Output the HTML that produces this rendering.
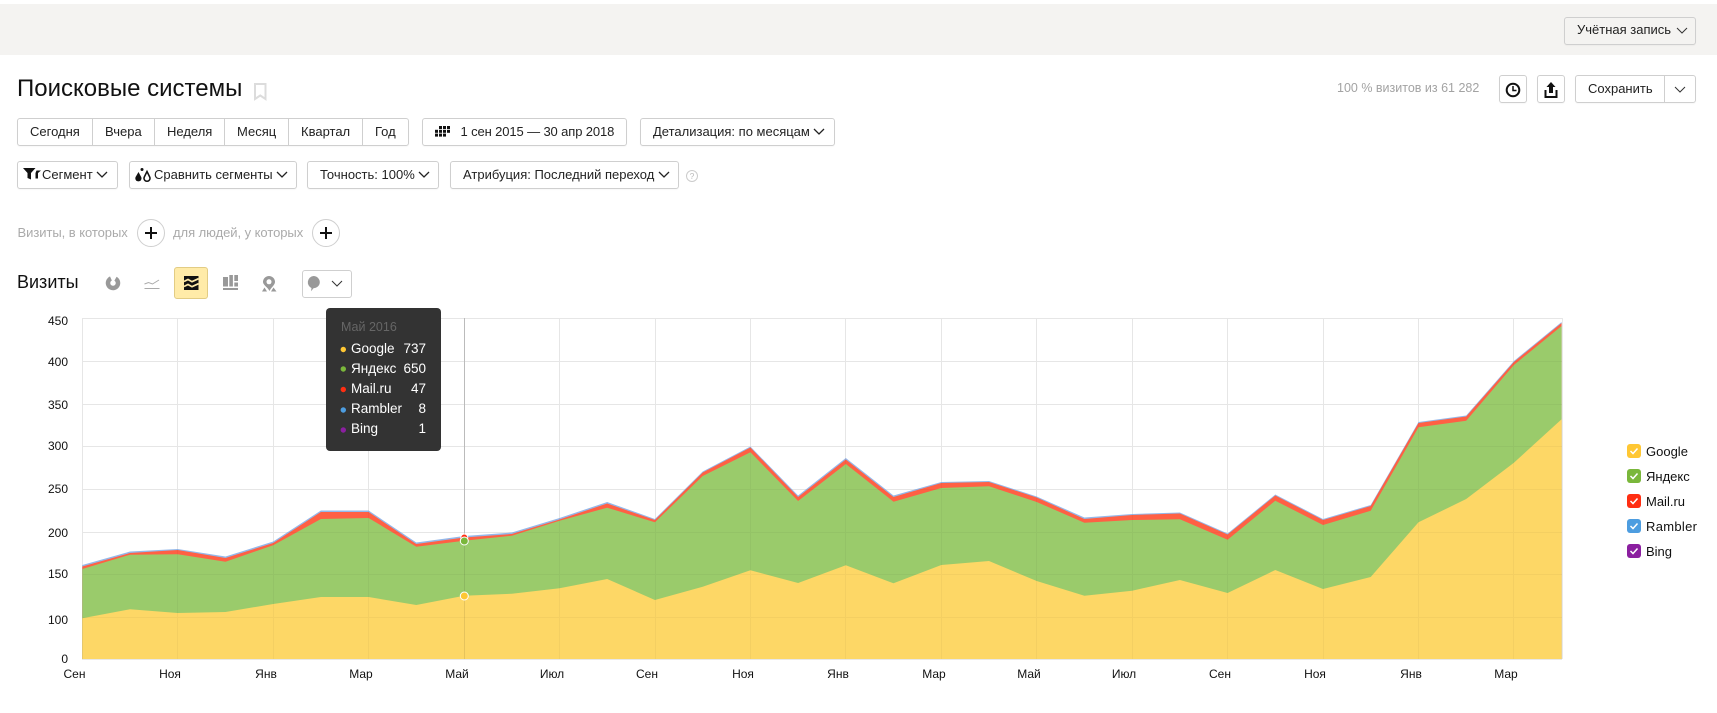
<!DOCTYPE html>
<html lang="ru"><head><meta charset="utf-8"><title>Поисковые системы</title>
<style>
html,body{margin:0;padding:0;background:#fff}
#p{position:relative;width:1717px;height:713px;overflow:hidden;background:#fff;font-family:"Liberation Sans","DejaVu Sans",sans-serif;font-size:13px;color:#222}
.t{position:absolute;white-space:nowrap;line-height:16px;height:16px}
.b{position:absolute;box-sizing:border-box;border:1px solid #cfcfcf;border-radius:3px;background:#fff;box-shadow:0 1px 1px rgba(0,0,0,.03)}
.d{position:absolute;top:118px;height:28px;width:1px;background:#cfcfcf}
.g{color:#a3a3a3}
svg{position:absolute;overflow:visible}
.c{fill:none;stroke:#222;stroke-width:1.3}
.e{fill:none;stroke:#333;stroke-width:1}
.w{color:#fff}
</style></head><body><div id="p">
<div style="position:absolute;left:0;top:4px;width:1717px;height:51px;background:#f4f3f1"></div>
<div class="b" style="left:1564px;top:17px;width:132px;height:28px;background:#f4f3f1"></div>
<span class="t" style="left:1577px;top:22px">Учётная запись</span>
<svg style="left:0;top:0" width="1" height="1"><path class="e" d="M1677 28l5 5 5-5"/></svg>

<span class="t" style="left:17px;top:75px;font-size:24px;line-height:28px;height:28px;color:#111">Поисковые системы</span>
<svg style="left:254px;top:83px" width="13" height="18"><path d="M1 1h10.500v15l-5.250-3.500L1 16z" fill="none" stroke="#dcdcdc" stroke-width="2"/></svg>

<span class="t g" style="left:1337px;top:80px;font-size:12.500px">100 % визитов из 61 282</span>
<div class="b" style="left:1499px;top:75px;width:28px;height:28px"></div>
<svg style="left:1499px;top:75px" width="28" height="28"><circle cx="14" cy="15" r="6.300" fill="none" stroke="#111" stroke-width="2"/><path d="M14 11v4.500h3.500" fill="none" stroke="#111" stroke-width="1.500"/></svg>
<div class="b" style="left:1537px;top:75px;width:28px;height:28px"></div>
<svg style="left:1537px;top:75px" width="28" height="28"><path d="M14 7l4.500 5H16v6h-4v-6H9.500z" fill="#111"/><path d="M8.500 15v7h11v-7" fill="none" stroke="#111" stroke-width="2"/></svg>
<div class="b" style="left:1575px;top:75px;width:121px;height:28px"></div>
<div style="position:absolute;left:1664px;top:75px;width:1px;height:28px;background:#cfcfcf"></div>
<span class="t" style="left:1588px;top:81px;color:#222">Сохранить</span>
<svg style="left:0;top:0" width="1" height="1"><path class="e" d="M1675 87l5 5 5-5"/></svg>

<div class="b" style="left:17px;top:118px;width:392px;height:28px"></div>
<div class="d" style="left:92px"></div><div class="d" style="left:154px"></div><div class="d" style="left:224px"></div><div class="d" style="left:288px"></div><div class="d" style="left:362px"></div>
<span class="t" style="left:30px;top:124px">Сегодня</span>
<span class="t" style="left:105px;top:124px">Вчера</span>
<span class="t" style="left:167px;top:124px">Неделя</span>
<span class="t" style="left:237px;top:124px">Месяц</span>
<span class="t" style="left:301px;top:124px">Квартал</span>
<span class="t" style="left:375px;top:124px">Год</span>

<div class="b" style="left:422px;top:118px;width:205px;height:28px"></div>
<svg style="left:435px;top:126px" width="16" height="11" fill="#111"><rect x="4" y="0" width="3" height="3"/><rect x="8" y="0" width="3" height="3"/><rect x="12" y="0" width="3" height="3"/><rect x="0" y="3.800" width="3" height="3"/><rect x="4" y="3.800" width="3" height="3"/><rect x="8" y="3.800" width="3" height="3"/><rect x="12" y="3.800" width="3" height="3"/><rect x="0" y="7.600" width="3" height="3"/><rect x="4" y="7.600" width="3" height="3"/><rect x="8" y="7.600" width="3" height="3"/></svg>
<span class="t" style="left:460.500px;top:124px;letter-spacing:-.12px">1 сен 2015 — 30 апр 2018</span>
<div class="b" style="left:640px;top:118px;width:195px;height:28px"></div>
<span class="t" style="left:653px;top:124px">Детализация: по месяцам</span>
<svg style="left:0;top:0" width="1" height="1"><path class="c" d="M814 129l5 5 5-5"/></svg>

<div class="b" style="left:17px;top:161px;width:101px;height:28px"></div>
<svg style="left:23px;top:168px" width="20" height="12" fill="#111"><path d="M0 0h12.500L8 5v6.500L4.500 10V5z"/><path d="M13.500 2.500H18L15 5v5.500H12.500V5z"/></svg>
<span class="t" style="left:42px;top:167px">Сегмент</span>
<svg style="left:0;top:0" width="1" height="1"><path class="c" d="M97 172l5 5 5-5"/></svg>
<div class="b" style="left:129px;top:161px;width:168px;height:28px"></div>
<svg style="left:135px;top:168px" width="17" height="14"><path d="M3.500 4l2.700 5a3.100 3.100 0 1 1-5.600 0z" fill="#111"/><path d="M12 3.500l2.700 5.500a3 3 0 1 1-5.400 0z" fill="none" stroke="#111" stroke-width="1.500"/><circle cx="7" cy="1.500" r="1.500" fill="#111"/></svg>
<span class="t" style="left:154px;top:167px">Сравнить сегменты</span>
<svg style="left:0;top:0" width="1" height="1"><path class="c" d="M277 172l5 5 5-5"/></svg>
<div class="b" style="left:307px;top:161px;width:132px;height:28px"></div>
<span class="t" style="left:320px;top:167px">Точность: 100%</span>
<svg style="left:0;top:0" width="1" height="1"><path class="c" d="M419 172l5 5 5-5"/></svg>
<div class="b" style="left:450px;top:161px;width:229px;height:28px"></div>
<span class="t" style="left:463px;top:167px">Атрибуция: Последний переход</span>
<svg style="left:0;top:0" width="1" height="1"><path class="c" d="M659 172l5 5 5-5"/></svg>
<svg style="left:685px;top:169px" width="14" height="14"><circle cx="7" cy="7" r="5.500" fill="none" stroke="#ccc"/><text x="7" y="10" font-size="8.500" text-anchor="middle" fill="#bbb" font-family="Liberation Sans">?</text></svg>

<span class="t" style="left:17.500px;top:225px;color:#aaa;letter-spacing:-.05px">Визиты, в которых</span>
<div class="b" style="left:137px;top:219px;width:28px;height:28px;border-radius:50%;box-shadow:none"></div>
<svg style="left:137px;top:219px" width="28" height="28"><path d="M14 8v12M8 14h12" stroke="#111" stroke-width="2"/></svg>
<span class="t" style="left:173px;top:225px;color:#aaa;letter-spacing:-.05px">для людей, у которых</span>
<div class="b" style="left:312px;top:219px;width:28px;height:28px;border-radius:50%;box-shadow:none"></div>
<svg style="left:312px;top:219px" width="28" height="28"><path d="M14 8v12M8 14h12" stroke="#111" stroke-width="2"/></svg>

<span class="t" style="left:17px;top:272px;font-size:18px;line-height:20px;height:20px;color:#111">Визиты</span>
<svg style="left:105px;top:275px" width="16" height="16"><circle cx="8" cy="8" r="5" fill="none" stroke="#999" stroke-width="4.500" stroke-dasharray="26.500 5" transform="rotate(-60 8 8)"/></svg>
<svg style="left:144px;top:278px" width="16" height="12" fill="none" stroke="#aaa"><path d="M.5 6l4-1.500 4 1.500 6.500-4"/><path d="M.5 10.500h15"/></svg>
<div style="position:absolute;box-sizing:border-box;left:174px;top:267px;width:34px;height:32px;background:#ffeba8;border:1px solid #e2cc84;border-radius:3px"></div>
<svg style="left:184px;top:276px" width="15" height="14"><rect width="14.500" height="14" fill="#111"/><path d="M0 5.500l4-2 4 2.200 6.500-3M0 10.500l4-2 4 2.200 6.500-3" fill="none" stroke="#ffeba8" stroke-width="1.700"/></svg>
<svg style="left:222.500px;top:275px" width="16" height="16" fill="#999"><rect x="0" y="2" width="5" height="9.500"/><rect x="6.300" y="0" width="3.600" height="11.500"/><rect x="11.300" y="0" width="3.700" height="6"/><rect x="11.300" y="7.500" width="3.700" height="4"/><rect x="0" y="13" width="15" height="2"/></svg>
<svg style="left:262px;top:275.500px" width="15" height="16"><path d="M7 0a6 6 0 0 1 6 6c0 3-4 5.500-5.500 9C6 11.500 1 9 1 6a6 6 0 0 1 6-6z" fill="#999"/><circle cx="7" cy="5.800" r="2.500" fill="#fff"/><path d="M0 15.500l2.500-4 2.500 4zM9 15.500l2.500-4 3 4z" fill="#999"/></svg>
<div class="b" style="left:302px;top:270px;width:50px;height:28px;box-shadow:none"></div>
<svg style="left:305px;top:276px" width="16" height="16"><path d="M8.500 0a6.300 6.300 0 0 1 6.300 6.300c0 3.600-3 5.700-6.300 6l-2.500 3 .5-3.300A6.300 6.300 0 0 1 8.500 0z" fill="#999"/></svg>
<svg style="left:0;top:0" width="1" height="1"><path class="e" d="M332 281l5 5 5-5"/></svg>

<svg style="left:0;top:0" width="1717" height="713">
<defs><g id="grid"><path d="M82 318.500H1562M82 361.500H1562M82 404.500H1562M82 446.500H1562M82 489.500H1562M82 532.500H1562M82 574.500H1562M82 617.500H1562M82.500 318V659M177.500 318V659M273.500 318V659M368.500 318V659M559.500 318V659M655.500 318V659M750.500 318V659M845.500 318V659M941.500 318V659M1036.500 318V659M1132.500 318V659M1227.500 318V659M1323.500 318V659M1418.500 318V659M1513.500 318V659"/></g>
<clipPath id="cl"><polygon points="82.3,565 130,551.500 177.700,549 225.500,556.500 273.200,541.500 320.900,510.500 368.600,510.500 416.300,542.500 464.100,536 511.800,532.500 559.500,518 607.200,502 654.900,519 702.700,471.500 750.400,446.500 798.100,495.500 845.800,458 893.500,495.500 941.300,482 989,481 1036.700,496.500 1084.400,517.500 1132.100,514 1179.900,512.500 1227.600,533.500 1275.300,494.500 1323,519 1370.700,505 1418.500,422 1466.200,415.500 1513.900,361 1561.600,322 1561.600,659 82.300,659"/></clipPath></defs>
<use href="#grid" stroke="#e6e6e6" fill="none"/>
<polygon fill="#94b8ea" points="82.3,565 130,551.500 177.700,549 225.500,556.500 273.200,541.500 320.900,510.500 368.600,510.500 416.300,542.500 464.100,536 511.800,532.500 559.500,518 607.200,502 654.900,519 702.700,471.500 750.400,446.500 798.100,495.500 845.800,458 893.500,495.500 941.300,482 989,481 1036.700,496.500 1084.400,517.500 1132.100,514 1179.900,512.500 1227.600,533.500 1275.300,494.500 1323,519 1370.700,505 1418.500,422 1466.200,415.500 1513.900,361 1561.600,322 1561.600,659 82.300,659"/>
<polygon fill="#ff6044" points="82.3,566.500 130,553 177.700,550 225.500,558 273.200,543 320.900,512 368.600,512 416.300,544 464.100,537.500 511.800,534 559.500,519.500 607.200,503.500 654.900,520 702.700,472.500 750.400,447.500 798.100,497 845.800,459.500 893.500,497 941.300,483 989,482 1036.700,497.500 1084.400,519 1132.100,515 1179.900,513.500 1227.600,534.500 1275.300,495.500 1323,520 1370.700,506 1418.500,423 1466.200,416.500 1513.900,362 1561.600,323 1561.600,659 82.300,659"/>
<polygon fill="#9acb6b" points="82.3,569 130,554.700 177.700,554.300 225.500,561.700 273.200,545.300 320.900,519 368.600,518 416.300,546.700 464.100,540.700 511.800,535.700 559.500,520.700 607.200,507.700 654.900,522.300 702.700,476 750.400,452.300 798.100,501 845.800,464 893.500,501.700 941.300,488 989,486.300 1036.700,502 1084.400,522.700 1132.100,520 1179.900,519.300 1227.600,539.700 1275.300,500.700 1323,525 1370.700,510.700 1418.500,427.300 1466.200,420.700 1513.900,365 1561.600,326 1561.600,659 82.300,659"/>
<polygon fill="#fdd766" points="82.3,618.300 130,609.300 177.700,613 225.500,612 273.200,604 320.900,597 368.600,597 416.300,605 464.100,595.700 511.800,593.700 559.500,588.300 607.200,579 654.900,600 702.700,586.700 750.400,570.300 798.100,583 845.800,565.300 893.500,583.300 941.300,565 989,561 1036.700,581 1084.400,595.700 1132.100,590.700 1179.900,580 1227.600,593 1275.300,570 1323,589 1370.700,577 1418.500,522.300 1466.200,499 1513.900,462.700 1561.600,419.300 1561.600,659 82.300,659"/>
<g clip-path="url(#cl)"><use href="#grid" stroke="#000" stroke-opacity=".035" fill="none"/></g>
<path d="M82 659.500H1562M1562.500 318V659" stroke="#e8e8e8" fill="none"/>
<path d="M464.500 318V536" stroke="#bbb" fill="none"/>
<path d="M464.500 536V659" stroke="#000" stroke-opacity=".09" fill="none"/>
<circle cx="464.300" cy="537.500" r="3.500" fill="#ff2e12" stroke="#fff"/>
<circle cx="464.300" cy="541" r="4" fill="#7ab73b" stroke="#fff"/>
<circle cx="464.300" cy="596" r="4" fill="#ffc733" stroke="#fff"/>
<g font-family="Liberation Sans" font-size="12" fill="#111" text-anchor="end">
<text x="68" y="325">450</text><text x="68" y="366">400</text><text x="68" y="409">350</text><text x="68" y="450">300</text><text x="68" y="493">250</text><text x="68" y="537">200</text><text x="68" y="578">150</text><text x="68" y="624">100</text><text x="68" y="663">0</text>
</g>
<g font-family="Liberation Sans" font-size="12" fill="#111" text-anchor="middle">
<text x="74.500" y="678">Сен</text><text x="170" y="678">Ноя</text><text x="266" y="678">Янв</text><text x="361" y="678">Мар</text><text x="457" y="678">Май</text><text x="552" y="678">Июл</text><text x="647" y="678">Сен</text><text x="743" y="678">Ноя</text><text x="838" y="678">Янв</text><text x="934" y="678">Мар</text><text x="1029" y="678">Май</text><text x="1124" y="678">Июл</text><text x="1220" y="678">Сен</text><text x="1315" y="678">Ноя</text><text x="1411" y="678">Янв</text><text x="1506" y="678">Мар</text>
</g>
</svg>

<div style="position:absolute;left:326px;top:308px;width:115px;height:143px;background:#333;border-radius:4px"></div>
<span class="t" style="left:341px;top:319px;color:#666;font-size:12.500px">Май 2016</span>
<svg style="left:339px;top:345px" width="9" height="90"><circle cx="4.300" cy="4.500" r="2.700" fill="#ffc733"/><circle cx="4.300" cy="24" r="2.700" fill="#7ab73b"/><circle cx="4.300" cy="44.500" r="2.700" fill="#ff2e12"/><circle cx="4.300" cy="65" r="2.700" fill="#4d9de0"/><circle cx="4.300" cy="85" r="2.700" fill="#8b1fa0"/></svg>
<span class="t w" style="left:351px;top:341px;font-size:13.500px">Google</span><span class="t w" style="right:1291px;top:341px;font-size:13.500px">737</span>
<span class="t w" style="left:351px;top:361px;font-size:13.500px">Яндекс</span><span class="t w" style="right:1291px;top:361px;font-size:13.500px">650</span>
<span class="t w" style="left:351px;top:381px;font-size:13.500px">Mail.ru</span><span class="t w" style="right:1291px;top:381px;font-size:13.500px">47</span>
<span class="t w" style="left:351px;top:401px;font-size:13.500px">Rambler</span><span class="t w" style="right:1291px;top:401px;font-size:13.500px">8</span>
<span class="t w" style="left:351px;top:421px;font-size:13.500px">Bing</span><span class="t w" style="right:1291px;top:421px;font-size:13.500px">1</span>

<svg style="left:1627px;top:444px" width="14" height="114" fill="none">
<rect y="0" width="14" height="14" rx="3" fill="#ffc733"/><rect y="25" width="14" height="14" rx="3" fill="#7ab73b"/><rect y="50" width="14" height="14" rx="3" fill="#ff2e12"/><rect y="75" width="14" height="14" rx="3" fill="#4d9de0"/><rect y="100" width="14" height="14" rx="3" fill="#8b1fa0"/>
<path d="M3.500 7l2.500 2.500L10.500 4.500M3.500 32l2.500 2.500L10.500 29.500M3.500 57l2.500 2.500L10.500 54.500M3.500 82l2.500 2.500L10.500 79.500M3.500 107l2.500 2.500L10.500 104.500" stroke="#fff" stroke-width="1.500"/>
</svg>
<span class="t" style="left:1646px;top:444px;color:#111">Google</span>
<span class="t" style="left:1646px;top:469px;color:#111">Яндекс</span>
<span class="t" style="left:1646px;top:494px;color:#111">Mail.ru</span>
<span class="t" style="left:1646px;top:519px;color:#111;letter-spacing:.3px">Rambler</span>
<span class="t" style="left:1646px;top:544px;color:#111">Bing</span>
</div></body></html>
